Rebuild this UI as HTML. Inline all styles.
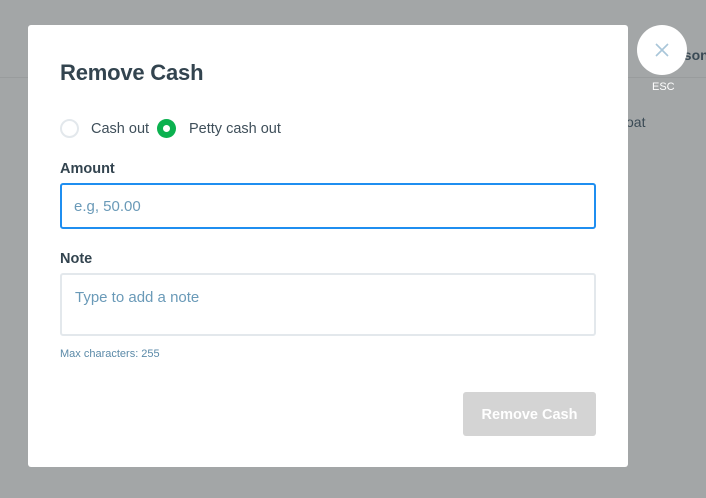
<!DOCTYPE html>
<html><head><style>
*{box-sizing:border-box;margin:0;padding:0}
body{width:706px;height:498px;background:#a3a6a7;font-family:"Liberation Sans",sans-serif;position:relative;overflow:hidden}
.line{position:absolute;left:0;right:0;top:77px;height:1px;background:#999c9d}
.bgt{position:absolute;font-size:14px;color:#3a4a55}
.modal{position:absolute;left:28px;top:25px;width:600px;height:442px;background:#fff;border-radius:3px}
h1{position:absolute;left:32px;top:35px;font-size:22px;font-weight:bold;color:#33444f;letter-spacing:-0.2px}
.radio{position:absolute;top:94px;width:19px;height:19px;border-radius:50%}
.r1{left:32px;border:2px solid #e3e8ec}
.r2{left:129px;background:#0bb14f}
.r2::after{content:"";position:absolute;left:6px;top:6px;width:7px;height:7px;border-radius:50%;background:#fff}
.rl{position:absolute;top:96px;font-size:14.5px;color:#3f4f5a}
.lbl{position:absolute;left:32px;font-size:14.5px;font-weight:bold;color:#33444f}
.inp{position:absolute;left:32px;width:536px;border-radius:3px;font-size:15px;color:#6a9ab8;padding-left:13px}
.a{top:158px;height:46px;border:2px solid #1f8ef0;line-height:44px;padding-left:12px}
.n{top:248px;height:63px;border:2px solid #e3e8ec;padding-top:14px}
.max{position:absolute;left:32px;top:323px;font-size:11px;color:#5b8aa8}
.btn{position:absolute;left:435px;top:367px;width:133px;height:44px;background:#d4d4d4;border-radius:3px;color:#fff;font-weight:bold;font-size:14.5px;text-align:center;line-height:46px}
.close{position:absolute;left:637px;top:25px;width:50px;height:50px;border-radius:50%;background:#fff}
.esc{position:absolute;left:652px;top:81px;font-size:11px;color:#fff}
</style></head><body>
<div class="line"></div>
<div class="bgt" style="left:676px;top:47px;font-weight:bold">ason</div>
<div class="bgt" style="left:626px;top:114px">oat</div>
<div class="modal">
<h1>Remove Cash</h1>
<div class="radio r1"></div><div class="rl" style="left:63px">Cash out</div>
<div class="radio r2"></div><div class="rl" style="left:161px">Petty cash out</div>
<div class="lbl" style="top:136px">Amount</div>
<div class="inp a">e.g, 50.00</div>
<div class="lbl" style="top:226px">Note</div>
<div class="inp n">Type to add a note</div>
<div class="max">Max characters: 255</div>
<div class="btn">Remove Cash</div>
</div>
<div class="close"><svg width="50" height="50"><path d="M19 19L31 31M31 19L19 31" stroke="#a9c6d9" stroke-width="1.6"/></svg></div>
<div class="esc">ESC</div>
</body></html>
